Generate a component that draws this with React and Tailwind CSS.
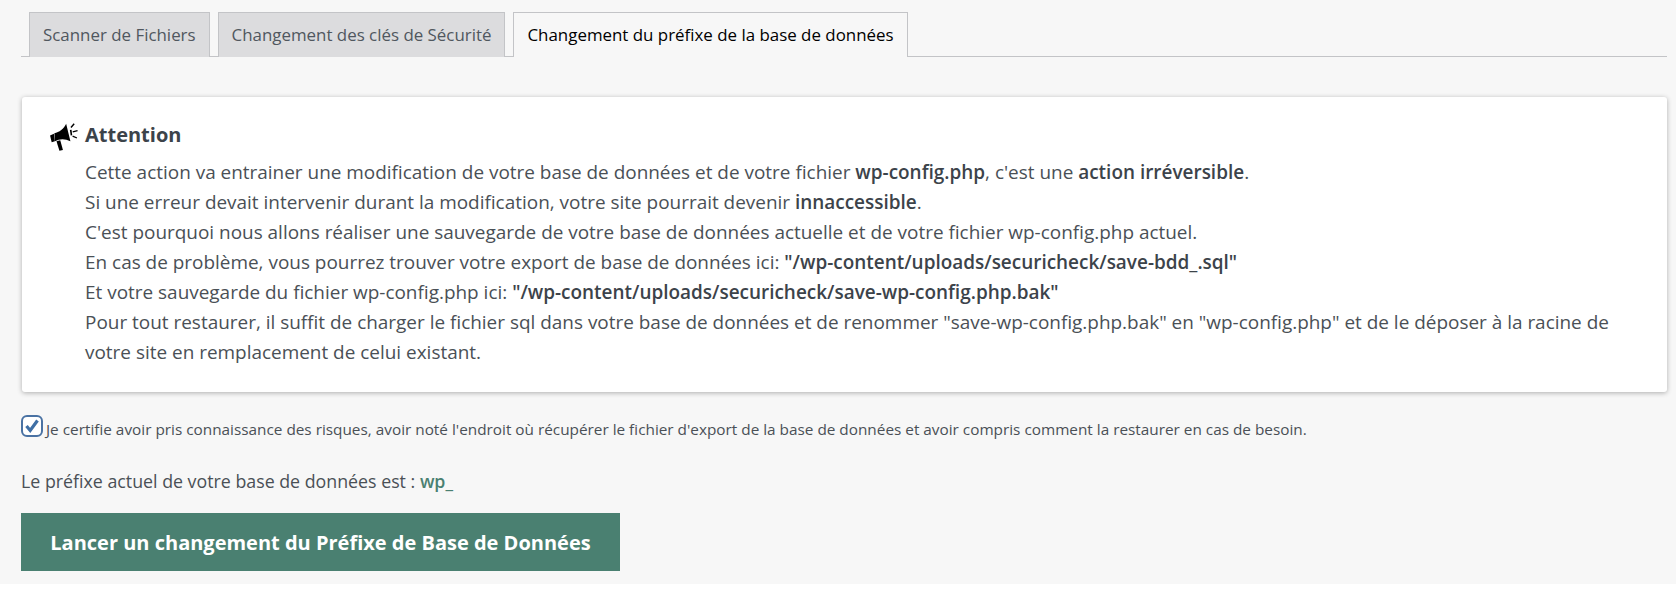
export default function App() {
  const tabBase = "flex items-center h-[45px] px-[13px] border border-[#c3c4c7] border-b-0 text-[16.9px] font-medium -mb-px";
  const strong = "font-semibold text-[#3c434a]";
  return (
    <div className="w-[1676px] h-[596px] bg-white font-['Open_Sans','Liberation_Sans',sans-serif] overflow-hidden">
      <div className="h-[584px] bg-[#f7f7f7] pl-[21px] pr-[9px] pt-[12px] text-[#4a5056]">
        <div className="flex gap-[8px] pl-[8px] border-b border-[#c3c4c7] h-[45px]">
          <div className={tabBase + " bg-[#dcdcde] text-[#50575e]"}>Scanner de Fichiers</div>
          <div className={tabBase + " bg-[#dcdcde] text-[#50575e]"}>Changement des clés de Sécurité</div>
          <div className={tabBase + " bg-[#f7f7f7] text-black border-b-[#f7f7f7]"}>Changement du préfixe de la base de données</div>
        </div>
        <div className="mt-[40px] ml-[1px] h-[295px] bg-white rounded-[3px] shadow-[0_1px_5px_rgba(0,0,0,0.3)] pl-[27px] pr-[30px] pt-[24px] flex gap-[6px]">
          <svg viewBox="0 0 28 28" className="w-[30px] h-[30px] shrink-0" fill="black">
            <path d="M1 13.500l3.500-1.500 1 7-3 .8z" />
            <path d="M5 11.500C9.500 10.500 14 7 16 2.500l4 16.500c-5-2.500-10-2.500-14.500 0z" />
            <path d="M7 19l3.500-1 2.500 9-3.300.8z" />
            <path d="M19.500 8.500l1.500-.3.7 5-1.500.3z" />
            <path d="M20 5.500l3-3.500 1 1-3 3.500zM22 9.500l4.500-1.200.3 1.200-4.500 1.200zM22.300 13.500l4 1.800-.5 1.100-4-1.800z" />
          </svg>
          <div className="text-[18.95px] leading-[30px]">
            <div className="text-[20px] font-bold leading-[30px] mb-[7px] mt-[-1px] text-[#3c434a]">Attention</div>
            <div>Cette action va entrainer une modification de votre base de données et de votre fichier <b className={strong}>wp-config.php</b>, c'est une <b className={strong}>action irréversible</b>.</div>
            <div>Si une erreur devait intervenir durant la modification, votre site pourrait devenir <b className={strong}>innaccessible</b>.</div>
            <div>C'est pourquoi nous allons réaliser une sauvegarde de votre base de données actuelle et de votre fichier wp-config.php actuel.</div>
            <div>En cas de problème, vous pourrez trouver votre export de base de données ici: <b className={strong}>"/wp-content/uploads/securicheck/save-bdd_.sql"</b></div>
            <div>Et votre sauvegarde du fichier wp-config.php ici: <b className={strong}>"/wp-content/uploads/securicheck/save-wp-config.php.bak"</b></div>
            <div>Pour tout restaurer, il suffit de charger le fichier sql dans votre base de données et de renommer "save-wp-config.php.bak" en "wp-config.php" et de le déposer à la racine de votre site en remplacement de celui existant.</div>
          </div>
        </div>
        <div className="mt-[23px] flex items-center gap-[3px] h-[22px] text-[15.33px]">
          <div className="w-[22px] h-[22px] rounded-[6px] border-[2.5px] border-[#4a72a3] bg-white flex items-center justify-center shrink-0">
            <svg viewBox="0 0 16 16" className="w-[16px] h-[16px]" fill="none" stroke="#3f6fa5" strokeWidth="3.200">
              <path d="M2.500 8l3.700 4.500L13.500 2.500" />
            </svg>
          </div>
          <span className="relative top-[3px]">Je certifie avoir pris connaissance des risques, avoir noté l'endroit où récupérer le fichier d'export de la base de données et avoir compris comment la restaurer en cas de besoin.</span>
        </div>
        <div className="mt-[32px] text-[17.8px] leading-[24px]">
          Le préfixe actuel de votre base de données est : <span className="text-[#4a8071] font-semibold">wp_</span>
        </div>
        <div className="mt-[20px] w-[599px] h-[58px] pt-[1px] bg-[#4a8071] text-white text-[20px] font-bold flex items-center justify-center">Lancer un changement du Préfixe de Base de Données</div>
      </div>
    </div>
  );
}
